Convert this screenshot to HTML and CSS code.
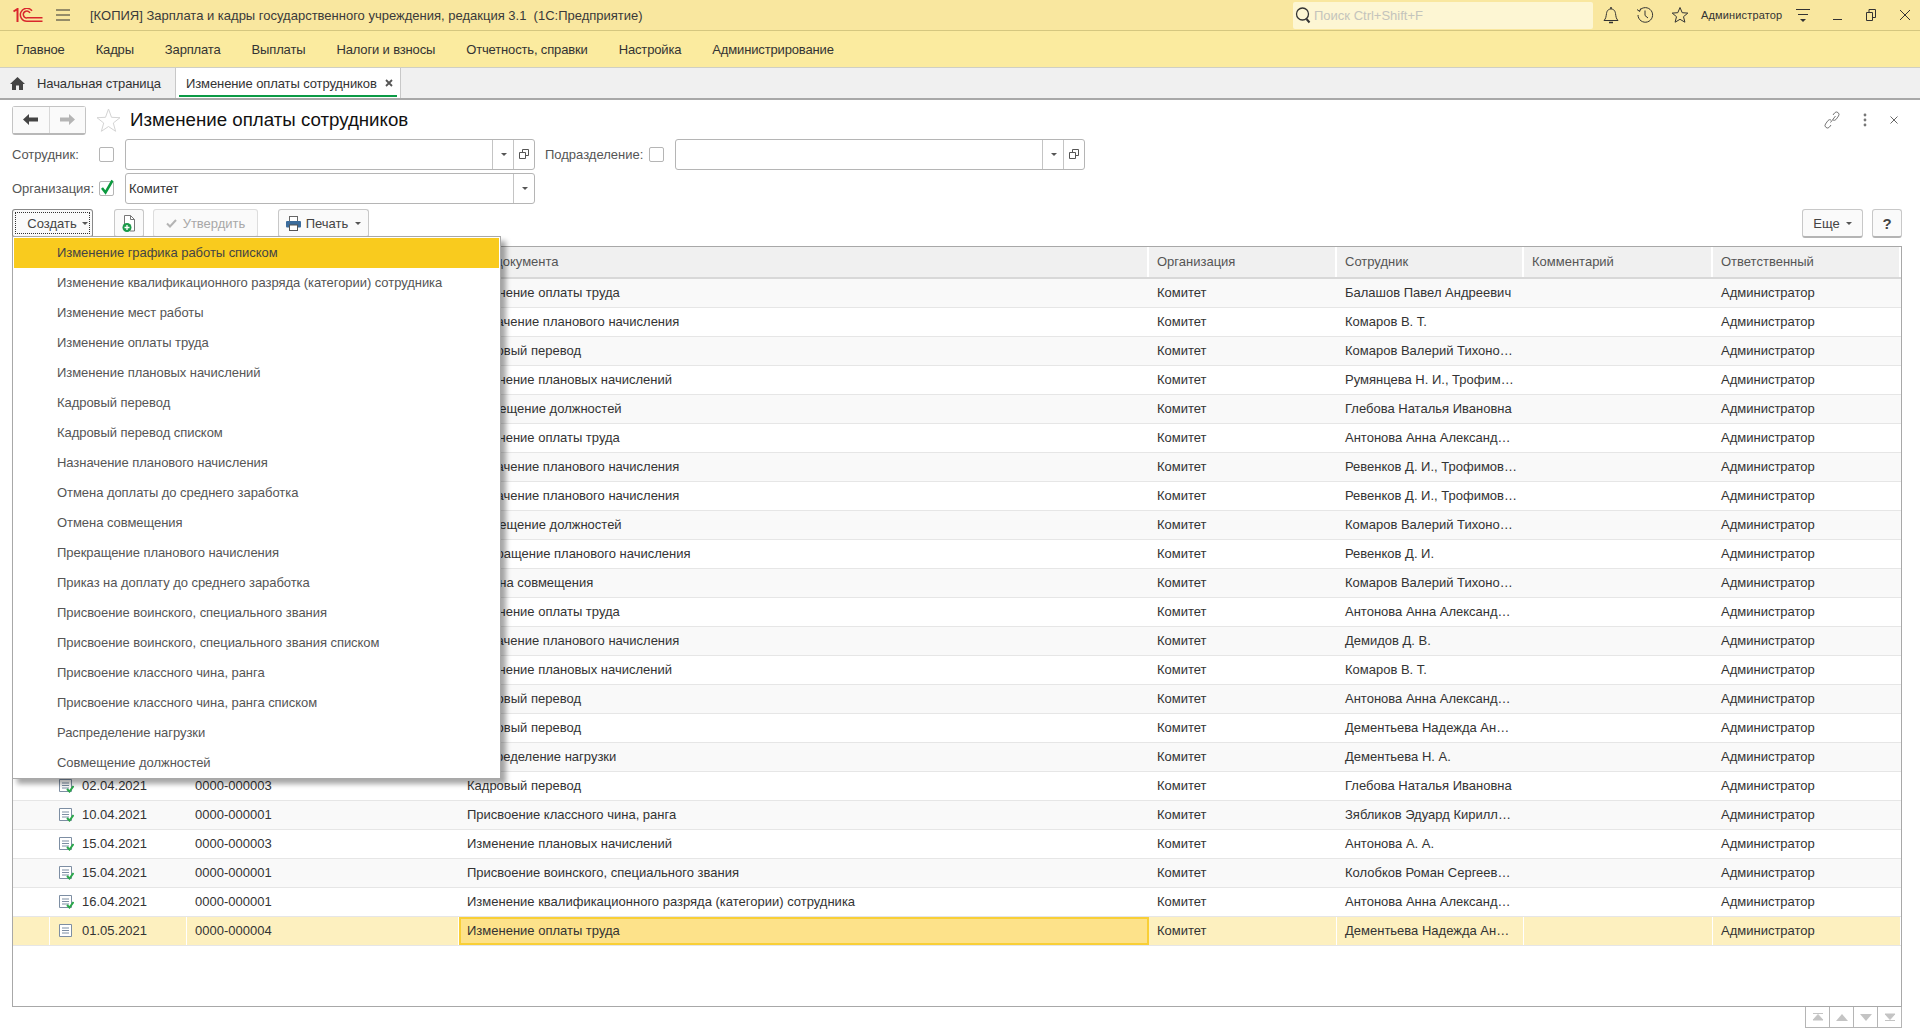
FILE: index.html
```html
<!DOCTYPE html>
<html lang="ru">
<head>
<meta charset="utf-8">
<title>Изменение оплаты сотрудников</title>
<link rel="stylesheet" href="styles.css">
</head>
<body>
<header class="titlebar">
  <svg class="logo" width="30" height="15" viewBox="0 0 30 15"><path d="M.5 3.500L4.500 1v13" fill="none" stroke="#d9262c" stroke-width="2"/><path d="M19 2.800A6.500 6.500 0 1 0 14 13.300M17 5A3.500 3.500 0 1 0 14 10" fill="none" stroke="#d9262c" stroke-width="1.500"/><path d="M14 9.800h15.500M14 13.300h15.500" stroke="#d9262c" stroke-width="1.500"/></svg>
  <svg class="burger" width="14" height="12" viewBox="0 0 14 12"><path d="M0 1h14M0 6h14M0 11h14" stroke="#333" stroke-width="1"/></svg>
  <div class="apptitle">[КОПИЯ] Зарплата и кадры государственного учреждения, редакция 3.1&nbsp; (1С:Предприятие)</div>
  <div class="search">
    <svg width="17" height="18" viewBox="0 0 17 18"><circle cx="7.500" cy="8" r="6" fill="none" stroke="#333" stroke-width="1.300"/><path d="M11.500 13l3 3.500" stroke="#333" stroke-width="2"/></svg>
    <span>Поиск Ctrl+Shift+F</span>
  </div>
  <div class="sysicons">
    <svg width="16" height="19" viewBox="0 0 16 19"><path d="M1 14.500c2-2 2-4 2.500-7C4 4 6 3 8 3s4 1 4.500 4.500c.5 3 .5 5 2.500 7z" fill="none" stroke="#333"/><path d="M8 1v2M6 16.500h4" stroke="#333" stroke-width="1.500"/></svg>
    <svg width="18" height="18" viewBox="0 0 18 18"><path d="M3.500 4.500A7.300 7.300 0 1 1 2 9" fill="none" stroke="#333"/><path d="M1 3.500l2.700 2 1-3M9 4.500V9.500l3 2.500" fill="none" stroke="#333"/></svg>
    <svg width="18" height="18" viewBox="0 0 18 18"><path d="M9 1.500l2.200 5.200 5.600.4-4.300 3.600 1.400 5.500L9 13.300l-4.900 2.900 1.400-5.500L1.200 7.100l5.600-.4z" fill="none" stroke="#333"/></svg>
  </div>
  <div class="admin">Администратор</div>
  <svg class="adminmenu" width="16" height="16" viewBox="0 0 16 16"><path d="M1 2.500h14M3 7.500h10" stroke="#333"/><path d="M5 12h6l-3 3z" fill="#333"/></svg>
  <div class="winbtns">
    <svg width="10" height="12" viewBox="0 0 10 12"><path d="M0 10.500h9" stroke="#333"/></svg>
    <svg width="10" height="12" viewBox="0 0 10 12"><path d="M.5 3.500h6v8h-6zM3 3.500V.5h6.500v8H6.500" fill="none" stroke="#333"/></svg>
    <svg width="12" height="12" viewBox="0 0 12 12"><path d="M1 1l10 10M11 1L1 11" stroke="#333"/></svg>
  </div>
</header>

<nav class="menubar">
  <a>Главное</a><a>Кадры</a><a>Зарплата</a><a>Выплаты</a><a>Налоги и взносы</a><a>Отчетность, справки</a><a>Настройка</a><a>Администрирование</a>
</nav>

<div class="tabs">
  <div class="tab tab-home">
    <svg width="15" height="13" viewBox="0 0 15 13"><path d="M7.500 0L15 7h-2v6H9V8.500H6V13H2V7H0z" fill="#444"/></svg>
    Начальная страница
  </div>
  <div class="tab tab-active">Изменение оплаты сотрудников <svg width="8" height="8" viewBox="0 0 8 8"><path d="M1 1l6 6M7 1L1 7" stroke="#555" stroke-width="1.800"/></svg></div>
</div>

<main class="form">
  <div class="formhead">
    <div class="navbtns">
      <button class="navbtn"><svg width="15" height="11" viewBox="0 0 15 11"><path d="M6 0v3.500h9v4H6V11L0 5.500z" fill="#444"/></svg></button>
      <button class="navbtn"><svg width="15" height="11" viewBox="0 0 15 11"><path d="M9 0v3.500H0v4h9V11l6-5.500z" fill="#b5b5b5"/></svg></button>
    </div>
    <svg class="favstar" width="25" height="25" viewBox="0 0 25 25"><path d="M12.500 1l3 8.300 8.500.4-6.700 5.300 2.300 8.300-7.100-4.800-7.100 4.800L7.700 15 1 9.700l8.500-.4z" fill="#fff" stroke="#d4d4d4"/></svg>
    <h1>Изменение оплаты сотрудников</h1>
    <div class="formtools">
      <svg width="16" height="18" viewBox="0 0 16 18"><path d="M6.500 11.500l5-6.500M9 4l1.500-2a2.500 2.500 0 0 1 4 3l-2.500 3.500a2.500 2.500 0 0 1-3 .5M7 14l-1.500 2a2.500 2.500 0 0 1-4-3L4 9.500a2.500 2.500 0 0 1 3-.5" fill="none" stroke="#777"/></svg>
      <svg width="4" height="14" viewBox="0 0 4 14"><circle cx="2" cy="2" r="1.400" fill="#777"/><circle cx="2" cy="7" r="1.400" fill="#777"/><circle cx="2" cy="12" r="1.400" fill="#777"/></svg>
      <svg width="8" height="8" viewBox="0 0 8 8"><path d="M.5.500l7 7M7.500.500l-7 7" stroke="#666"/></svg>
    </div>
  </div>

  <div class="filter">
    <label class="flabel lab-emp">Сотрудник:</label>
    <span class="chk"></span>
    <div class="field f-emp"><span class="fval"></span>
      <span class="fbtn"><i class="tri"></i></span>
      <span class="fbtn"><svg width="10" height="10" viewBox="0 0 10 10"><path d="M.5 3.500h6v6h-6zM3.500 3V.5h6v6H7" fill="none" stroke="#555"/></svg></span>
    </div>
    <label class="flabel lab-dep">Подразделение:</label>
    <span class="chk"></span>
    <div class="field f-emp"><span class="fval"></span>
      <span class="fbtn"><i class="tri"></i></span>
      <span class="fbtn"><svg width="10" height="10" viewBox="0 0 10 10"><path d="M.5 3.500h6v6h-6zM3.500 3V.5h6v6H7" fill="none" stroke="#555"/></svg></span>
    </div>
  </div>
  <div class="filter">
    <label class="flabel lab-emp">Организация:</label>
    <span class="chk chk-on"><svg width="15" height="16" viewBox="0 0 15 16"><path d="M2 9l3.500 4.500L12.500 1.500" fill="none" stroke="#0c9a3f" stroke-width="2.500"/></svg></span>
    <div class="field f-org"><span class="fval">Комитет</span><span class="fbtn"><i class="tri"></i></span></div>
  </div>

  <div class="cmdbar">
    <button class="btn btn-create"><span class="dots">Создать <i class="tri"></i></span></button>
    <button class="btn btn-icon"><svg width="15" height="19" viewBox="0 0 15 19"><path d="M2.500 13V1.500h6l4 4V17H8" fill="#fff" stroke="#777"/><path d="M8.500 1.500v4h4" fill="none" stroke="#777"/><circle cx="5" cy="13.500" r="4.500" fill="#1a9a48"/><path d="M5 11v5M2.500 13.500h5" stroke="#fff" stroke-width="1.300"/></svg></button>
    <button class="btn btn-dis"><svg width="11" height="9" viewBox="0 0 11 9"><path d="M1 4.500l3 3 6-6.500" fill="none" stroke="#b4b4b4" stroke-width="2"/></svg> Утвердить</button>
    <button class="btn btn-print"><svg width="15" height="15" viewBox="0 0 15 15"><rect x="3.500" y=".5" width="8" height="5" fill="#fff" stroke="#666"/><rect y="5" width="15" height="6.500" rx="1" fill="#3b6c9c"/><rect x="3.500" y="9" width="8" height="5.500" fill="#fff" stroke="#555"/></svg> Печать <i class="tri"></i></button>
    <div class="cmdright">
      <button class="btn btn-more">Еще <i class="tri"></i></button>
      <button class="btn btn-help">?</button>
    </div>
  </div>

  <div class="tablewrap">
    <div class="row head">
      <div class="c c0"></div><div class="c c1"></div><div class="c c2"></div><div class="c c3">Вид документа</div><div class="c c4">Организация</div><div class="c c5">Сотрудник</div><div class="c c6">Комментарий</div><div class="c c7">Ответственный</div>
    </div>
    <div class="row"><div class="c c0"></div><div class="c c1"></div><div class="c c2"></div><div class="c c3">Изменение оплаты труда</div><div class="c c4">Комитет</div><div class="c c5">Балашов Павел Андреевич</div><div class="c c6"></div><div class="c c7">Администратор</div></div>
    <div class="row"><div class="c c0"></div><div class="c c1"></div><div class="c c2"></div><div class="c c3">Назначение планового начисления</div><div class="c c4">Комитет</div><div class="c c5">Комаров В. Т.</div><div class="c c6"></div><div class="c c7">Администратор</div></div>
    <div class="row"><div class="c c0"></div><div class="c c1"></div><div class="c c2"></div><div class="c c3">Кадровый перевод</div><div class="c c4">Комитет</div><div class="c c5">Комаров Валерий Тихоно…</div><div class="c c6"></div><div class="c c7">Администратор</div></div>
    <div class="row"><div class="c c0"></div><div class="c c1"></div><div class="c c2"></div><div class="c c3">Изменение плановых начислений</div><div class="c c4">Комитет</div><div class="c c5">Румянцева Н. И., Трофим…</div><div class="c c6"></div><div class="c c7">Администратор</div></div>
    <div class="row"><div class="c c0"></div><div class="c c1"></div><div class="c c2"></div><div class="c c3">Совмещение должностей</div><div class="c c4">Комитет</div><div class="c c5">Глебова Наталья Ивановна</div><div class="c c6"></div><div class="c c7">Администратор</div></div>
    <div class="row"><div class="c c0"></div><div class="c c1"></div><div class="c c2"></div><div class="c c3">Изменение оплаты труда</div><div class="c c4">Комитет</div><div class="c c5">Антонова Анна Александ…</div><div class="c c6"></div><div class="c c7">Администратор</div></div>
    <div class="row"><div class="c c0"></div><div class="c c1"></div><div class="c c2"></div><div class="c c3">Назначение планового начисления</div><div class="c c4">Комитет</div><div class="c c5">Ревенков Д. И., Трофимов…</div><div class="c c6"></div><div class="c c7">Администратор</div></div>
    <div class="row"><div class="c c0"></div><div class="c c1"></div><div class="c c2"></div><div class="c c3">Назначение планового начисления</div><div class="c c4">Комитет</div><div class="c c5">Ревенков Д. И., Трофимов…</div><div class="c c6"></div><div class="c c7">Администратор</div></div>
    <div class="row"><div class="c c0"></div><div class="c c1"></div><div class="c c2"></div><div class="c c3">Совмещение должностей</div><div class="c c4">Комитет</div><div class="c c5">Комаров Валерий Тихоно…</div><div class="c c6"></div><div class="c c7">Администратор</div></div>
    <div class="row"><div class="c c0"></div><div class="c c1"></div><div class="c c2"></div><div class="c c3">Прекращение планового начисления</div><div class="c c4">Комитет</div><div class="c c5">Ревенков Д. И.</div><div class="c c6"></div><div class="c c7">Администратор</div></div>
    <div class="row"><div class="c c0"></div><div class="c c1"></div><div class="c c2"></div><div class="c c3">Отмена совмещения</div><div class="c c4">Комитет</div><div class="c c5">Комаров Валерий Тихоно…</div><div class="c c6"></div><div class="c c7">Администратор</div></div>
    <div class="row"><div class="c c0"></div><div class="c c1"></div><div class="c c2"></div><div class="c c3">Изменение оплаты труда</div><div class="c c4">Комитет</div><div class="c c5">Антонова Анна Александ…</div><div class="c c6"></div><div class="c c7">Администратор</div></div>
    <div class="row"><div class="c c0"></div><div class="c c1"></div><div class="c c2"></div><div class="c c3">Назначение планового начисления</div><div class="c c4">Комитет</div><div class="c c5">Демидов Д. В.</div><div class="c c6"></div><div class="c c7">Администратор</div></div>
    <div class="row"><div class="c c0"></div><div class="c c1"></div><div class="c c2"></div><div class="c c3">Изменение плановых начислений</div><div class="c c4">Комитет</div><div class="c c5">Комаров В. Т.</div><div class="c c6"></div><div class="c c7">Администратор</div></div>
    <div class="row"><div class="c c0"></div><div class="c c1"></div><div class="c c2"></div><div class="c c3">Кадровый перевод</div><div class="c c4">Комитет</div><div class="c c5">Антонова Анна Александ…</div><div class="c c6"></div><div class="c c7">Администратор</div></div>
    <div class="row"><div class="c c0"></div><div class="c c1"></div><div class="c c2"></div><div class="c c3">Кадровый перевод</div><div class="c c4">Комитет</div><div class="c c5">Дементьева Надежда Ан…</div><div class="c c6"></div><div class="c c7">Администратор</div></div>
    <div class="row"><div class="c c0"></div><div class="c c1"></div><div class="c c2"></div><div class="c c3">Распределение нагрузки</div><div class="c c4">Комитет</div><div class="c c5">Дементьева Н. А.</div><div class="c c6"></div><div class="c c7">Администратор</div></div>
    <div class="row"><div class="c c0"></div><div class="c c1"><svg class="doc" width="15" height="14" viewBox="0 0 15 14"><use href="#docp"/></svg>02.04.2021</div><div class="c c2">0000-000003</div><div class="c c3">Кадровый перевод</div><div class="c c4">Комитет</div><div class="c c5">Глебова Наталья Ивановна</div><div class="c c6"></div><div class="c c7">Администратор</div></div>
    <div class="row"><div class="c c0"></div><div class="c c1"><svg class="doc" width="15" height="14" viewBox="0 0 15 14"><use href="#docp"/></svg>10.04.2021</div><div class="c c2">0000-000001</div><div class="c c3">Присвоение классного чина, ранга</div><div class="c c4">Комитет</div><div class="c c5">Зябликов Эдуард Кирилл…</div><div class="c c6"></div><div class="c c7">Администратор</div></div>
    <div class="row"><div class="c c0"></div><div class="c c1"><svg class="doc" width="15" height="14" viewBox="0 0 15 14"><use href="#docp"/></svg>15.04.2021</div><div class="c c2">0000-000003</div><div class="c c3">Изменение плановых начислений</div><div class="c c4">Комитет</div><div class="c c5">Антонова А. А.</div><div class="c c6"></div><div class="c c7">Администратор</div></div>
    <div class="row"><div class="c c0"></div><div class="c c1"><svg class="doc" width="15" height="14" viewBox="0 0 15 14"><use href="#docp"/></svg>15.04.2021</div><div class="c c2">0000-000001</div><div class="c c3">Присвоение воинского, специального звания</div><div class="c c4">Комитет</div><div class="c c5">Колобков Роман Сергеев…</div><div class="c c6"></div><div class="c c7">Администратор</div></div>
    <div class="row"><div class="c c0"></div><div class="c c1"><svg class="doc" width="15" height="14" viewBox="0 0 15 14"><use href="#docp"/></svg>16.04.2021</div><div class="c c2">0000-000001</div><div class="c c3">Изменение квалификационного разряда (категории) сотрудника</div><div class="c c4">Комитет</div><div class="c c5">Антонова Анна Александ…</div><div class="c c6"></div><div class="c c7">Администратор</div></div>
    <div class="row sel"><div class="c c0"></div><div class="c c1"><svg class="doc" width="15" height="14" viewBox="0 0 15 14"><use href="#docu"/></svg>01.05.2021</div><div class="c c2">0000-000004</div><div class="c c3 cur">Изменение оплаты труда</div><div class="c c4">Комитет</div><div class="c c5">Дементьева Надежда Ан…</div><div class="c c6"></div><div class="c c7">Администратор</div></div>
  </div>

  <div class="pager">
    <span class="pg"><svg width="12" height="8" viewBox="0 0 12 8"><path d="M1 .5h10M6 1.500l5 5.500H1z" fill="#c4c4c4" stroke="#c4c4c4"/></svg></span>
    <span class="pg"><svg width="12" height="7" viewBox="0 0 12 7"><path d="M6 0l6 7H0z" fill="#c4c4c4"/></svg></span>
    <span class="pg"><svg width="12" height="7" viewBox="0 0 12 7"><path d="M6 7l6-7H0z" fill="#c4c4c4"/></svg></span>
    <span class="pg"><svg width="12" height="8" viewBox="0 0 12 8"><path d="M1 7.500h10M6 6.500L11 1H1z" fill="#c4c4c4" stroke="#c4c4c4"/></svg></span>
  </div>
</main>

<div class="popup">
  <div class="pi on">Изменение графика работы списком</div>
  <div class="pi">Изменение квалификационного разряда (категории) сотрудника</div>
  <div class="pi">Изменение мест работы</div>
  <div class="pi">Изменение оплаты труда</div>
  <div class="pi">Изменение плановых начислений</div>
  <div class="pi">Кадровый перевод</div>
  <div class="pi">Кадровый перевод списком</div>
  <div class="pi">Назначение планового начисления</div>
  <div class="pi">Отмена доплаты до среднего заработка</div>
  <div class="pi">Отмена совмещения</div>
  <div class="pi">Прекращение планового начисления</div>
  <div class="pi">Приказ на доплату до среднего заработка</div>
  <div class="pi">Присвоение воинского, специального звания</div>
  <div class="pi">Присвоение воинского, специального звания списком</div>
  <div class="pi">Присвоение классного чина, ранга</div>
  <div class="pi">Присвоение классного чина, ранга списком</div>
  <div class="pi">Распределение нагрузки</div>
  <div class="pi">Совмещение должностей</div>
</div>

<svg class="defs" width="0" height="0">
  <defs>
    <g id="docu"><path d="M.5.5h12v12H.5z" fill="#fff" stroke="#7d8ea3"/><path d="M3 4h7M3 6.500h7M3 9h7" stroke="#7d8ea3"/></g>
    <g id="docp"><use href="#docu"/><path d="M8 10l2.500 2.500L14.500 7" fill="none" stroke="#2aa84a" stroke-width="2"/></g>
  </defs>
</svg>
</body>
</html>
```
FILE: styles.css
```css
* { box-sizing: border-box; }
html, body { margin: 0; height: 100%; }
body { width: 1920px; height: 1036px; overflow: hidden; position: relative; background: #fff; font: 13px "Liberation Sans", Arial, sans-serif; color: #333; }
button { font: inherit; color: inherit; }
.defs { position: absolute; }

.titlebar { height: 31px; background: #f9e79f; border-bottom: 1px solid #d5c77f; display: flex; align-items: center; padding-left: 13px; }
.logo { flex: none; }
.burger { margin-left: 13px; flex: none; }
.apptitle { margin-left: 20px; width: 1147px; font-size: 13px; color: #3a3a3a; white-space: nowrap; }
.search { margin-left: 56px; width: 300px; height: 27px; background: #fdf6d3; border-radius: 2px; display: flex; align-items: center; gap: 2px; padding-left: 2px; color: #c4c4bc; font-size: 13px; flex: none; }
.sysicons { margin-left: 10px; display: flex; align-items: center; gap: 17px; }
.admin { margin-left: 12px; font-size: 11px; letter-spacing: .15px; white-space: nowrap; }
.adminmenu { margin-left: 13px; flex: none; }
.winbtns { margin-left: 22px; display: flex; align-items: center; gap: 23px; }

.menubar { height: 37px; background: #fbeb9f; border-bottom: 1px solid #cfcfc4; display: flex; align-items: center; padding-left: 16px; gap: 31px; letter-spacing: -.15px; }
.tabs { height: 32px; background: #f0f0f0; border-bottom: 2px solid #a8a8a8; display: flex; letter-spacing: -.1px; }
.tab { display: flex; align-items: center; white-space: nowrap; }
.tab-home { width: 176px; padding-left: 10px; gap: 12px; border-right: 1px solid #c8c8c8; }
.tab-active { width: 225px; background: #fff; padding-left: 10px; gap: 8px; border-right: 1px solid #c8c8c8; position: relative; }
.tab-active::after { content: ""; position: absolute; left: 3px; right: 3px; bottom: 1px; height: 2px; background: #0b9a45; }

.form { padding: 0 18px 0 12px; position: relative; }
.formhead { height: 37px; padding-top: 3px; display: flex; align-items: center; }
.navbtns { display: flex; width: 74px; height: 29px; border: 1px solid #c4c4c4; border-bottom: 2px solid #b8b8b8; border-radius: 3px; }
.navbtn { flex: 1; padding: 0; background: #fafafa; border: 0; display: flex; align-items: center; justify-content: center; }
.navbtn:first-child { border-right: 1px solid #d8d8d8; }
.favstar { margin-left: 10px; }
h1 { margin: 0 0 0 9px; font-weight: 400; font-size: 18.7px; color: #111; white-space: nowrap; }
.formtools { margin-left: auto; margin-right: 4px; display: flex; align-items: center; gap: 23px; }

.filter { height: 34px; display: flex; align-items: center; }
.flabel { color: #555; white-space: nowrap; }
.lab-emp { width: 87px; }
.lab-dep { margin-left: 10px; width: 104px; }
.chk { width: 15px; height: 15px; border: 1px solid #b5b5b5; border-radius: 2px; background: #fff; margin-right: 11px; flex: none; position: relative; }
.chk-on svg { position: absolute; left: 0; top: -3px; }
.field { height: 31px; border: 1px solid #b5b5b5; border-radius: 3px; display: flex; background: #fff; }
.f-emp { width: 410px; }
.f-org { width: 410px; }
.fval { flex: 1; padding: 0 3px; line-height: 29px; color: #333; }
.fbtn { width: 21px; border-left: 1px solid #c4c4c4; display: flex; align-items: center; justify-content: center; }
.tri { display: inline-block; width: 0; height: 0; border-left: 3px solid transparent; border-right: 3px solid transparent; border-top: 3px solid #555; vertical-align: middle; margin-left: 2px; }

.cmdbar { height: 33px; margin-top: 2px; display: flex; align-items: center; }
.btn { height: 29px; border: 1px solid #c8c8c8; border-bottom: 2px solid #b4b4b4; border-radius: 3px; background: #fafafa; white-space: nowrap; display: inline-flex; align-items: center; justify-content: center; padding: 0; color: #444; }
.btn-create { width: 81px; border-color: #888; padding: 2px; }
.dots { flex: 1; height: 100%; border: 1px dotted #333; display: flex; align-items: center; justify-content: center; gap: 3px; padding-left: 10px; }
.btn-icon { width: 30px; margin-left: 21px; }
.btn-dis { width: 105px; margin-left: 9px; color: #a8a8a8; gap: 6px; border-color: #ddd; }
.btn-print { width: 91px; margin-left: 20px; gap: 5px; }
.cmdright { margin-left: auto; display: flex; gap: 9px; }
.btn-more { width: 61px; gap: 4px; }
.btn-help { width: 30px; font-weight: 700; font-size: 15px; }

.tablewrap { margin-top: 6px; height: 761px; border: 1px solid #a8a8a8; background: #fff; }
.row { height: 29px; display: flex; border-bottom: 1px solid #e6e6e6; background: #fff; }
.row:nth-child(even) { background: #f9f9f9; }
.row.head { height: 32px; background: #f0f0f0; border-bottom: 2px solid #d8d8d8; color: #555; }
.row.head .c { border-right: 2px solid #fff; padding-left: 8px; }
.row.head .c3 { padding-left: 9px; }
.c { flex: none; padding-left: 8px; line-height: 28px; white-space: nowrap; overflow: hidden; display: flex; align-items: center; }
.c0 { width: 37px; }
.c1 { width: 137px; padding-left: 9px; gap: 8px; }
.c2 { width: 272px; }
.c3 { width: 690px; }
.c4 { width: 188px; }
.c5 { width: 187px; }
.c6 { width: 189px; }
.c7 { flex: 1; }
.row.sel { height: 29px; background: #fdf0bf; }
.row.sel .c { border-right: 1px solid #fff; }
.row.sel .cur { background: #fde28a; border: 2px solid #f9cf36; padding-left: 6px; }

.pager { display: flex; justify-content: flex-end; height: 21px; }
.pg { width: 24px; border: 1px solid #b5b5b5; border-top: 0; border-left-width: 0; display: flex; align-items: center; justify-content: center; }
.pg:first-child { width: 25px; border-left-width: 1px; }

.popup { position: absolute; left: 12px; top: 236px; width: 489px; height: 543px; background: #fff; border: 1px solid #a8a8a8; padding: 1px; box-shadow: 5px 5px 5px rgba(0,0,0,.35); letter-spacing: -.05px; }
.pi { height: 30px; line-height: 29px; padding-left: 43px; color: #555; white-space: nowrap; }
.pi.on { background: #f9cb1e; color: #444; }
```
